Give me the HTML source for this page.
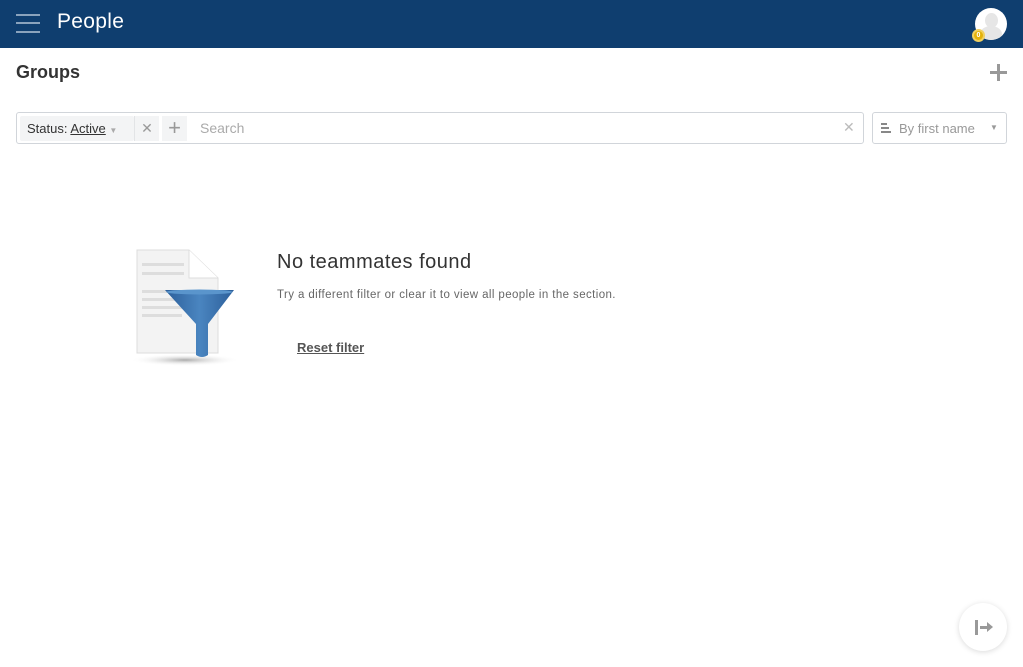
<!DOCTYPE html>
<html><head><style>
*{margin:0;padding:0;box-sizing:border-box}
body{width:1023px;height:667px;background:#fff;font-family:"Liberation Sans",sans-serif;position:relative;overflow:hidden;color:#333}
.hdr{position:absolute;left:0;top:0;width:1023px;height:48px;background:#0f3e6f}
.ham{position:absolute;left:16px;width:24px;height:2px;background:#8aa3bd}
.abs{position:absolute}
</style></head><body>
<div class="hdr">
 <div class="ham" style="top:14px"></div><div class="ham" style="top:22px"></div><div class="ham" style="top:31px"></div>
 <div class="abs" style="left:57px;top:10px;color:#fff;font-size:21px;letter-spacing:.3px">People</div>
 <div class="abs" style="left:975px;top:8px;width:32px;height:32px;border-radius:50%;background:#fff;overflow:hidden">
  <div class="abs" style="left:10px;top:5px;width:13px;height:15px;border-radius:50%;background:#e6e6e6"></div>
  <div class="abs" style="left:5px;top:18px;width:22px;height:16px;border-radius:50% 50% 0 0;background:#e6e6e6"></div>
 </div>
 <div class="abs" style="left:972px;top:29px;width:13px;height:13px;border-radius:50%;background:#e3b20a;border:2px solid #f0d060;color:#fff;font-size:7px;font-weight:bold;text-align:center;line-height:9px">0</div>
</div>
<div class="abs" style="left:16px;top:62px;font-size:18px;font-weight:bold;color:#333">Groups</div>
<div class="abs" style="left:990px;top:64px;width:17px;height:17px">
 <div class="abs" style="left:7px;top:0;width:3px;height:17px;background:#999"></div>
 <div class="abs" style="left:0;top:7px;width:17px;height:3px;background:#999"></div>
</div>
<div class="abs" style="left:16px;top:112px;width:848px;height:32px;border:1px solid #d1d5da;border-radius:3px">
 <div class="abs" style="left:3px;top:3px;width:114px;height:25px;background:#f3f4f5;border-radius:2px;font-size:13px;line-height:25px;padding-left:7px;color:#333">Status: <span style="text-decoration:underline">Active</span> <span style="color:#aaa;font-size:8px">▼</span></div>
 <div class="abs" style="left:117px;top:3px;width:25px;height:25px;background:#f3f4f5;border-left:1px solid #e2e4e6;color:#999;text-align:center;line-height:25px;font-size:14px">✕</div>
 <div class="abs" style="left:145px;top:3px;width:25px;height:25px;background:#f3f4f5;color:#999;text-align:center;line-height:24px;font-size:22px">+</div>
 <div class="abs" style="left:183px;top:7px;font-size:14px;color:#aaa">Search</div>
 <div class="abs" style="left:826px;top:6px;font-size:14px;color:#bbb">✕</div>
</div>
<div class="abs" style="left:872px;top:112px;width:135px;height:32px;border:1px solid #d1d5da;border-radius:3px">
 <div class="abs" style="left:8px;top:10px;width:6px;height:2px;background:#888"></div>
 <div class="abs" style="left:8px;top:14px;width:8px;height:2px;background:#888"></div>
 <div class="abs" style="left:8px;top:18px;width:10px;height:2px;background:#888"></div>
 <div class="abs" style="left:26px;top:8px;font-size:13px;color:#999">By first name</div>
 <div class="abs" style="left:117px;top:10px;font-size:8px;color:#999">▼</div>
</div>
<svg class="abs" style="left:128px;top:245px" width="115" height="125">
 <defs><radialGradient id="s"><stop offset="0" stop-color="#aaa"/><stop offset="1" stop-color="#fff" stop-opacity="0"/></radialGradient>
 <linearGradient id="f" x1="0" x2="1"><stop offset="0" stop-color="#2c5f9a"/><stop offset=".5" stop-color="#4a85c0"/><stop offset="1" stop-color="#2c5f9a"/></linearGradient></defs>
 <ellipse cx="57" cy="115" rx="55" ry="6" fill="url(#s)"/>
 <path d="M9 5 H61 L90 33 V108 H9 Z" fill="#f3f3f3" stroke="#ddd"/>
 <path d="M61 5 V33 H90" fill="#fff" stroke="#ddd"/>
 <g fill="#ddd"><rect x="14" y="18" width="42" height="3"/><rect x="14" y="27" width="42" height="3"/><rect x="14" y="45" width="40" height="3"/><rect x="14" y="53" width="40" height="3"/><rect x="14" y="61" width="40" height="3"/><rect x="14" y="69" width="40" height="3"/></g>
 <path d="M37 45 H106 L80 79 V110 Q74 114 68 110 V79 Z" fill="url(#f)"/>
 <ellipse cx="71.5" cy="47" rx="33" ry="2.5" fill="#5a95cc"/>
</svg>
<div class="abs" style="left:277px;top:251px;font-size:20px;color:#333;letter-spacing:.5px">No teammates found</div>
<div class="abs" style="left:277px;top:289px;font-size:11.5px;color:#666;letter-spacing:.4px">Try a different filter or clear it to view all people in the section.</div>
<div class="abs" style="left:297px;top:340px;font-size:13px;color:#555;font-weight:bold;text-decoration:underline">Reset filter</div>
<div class="abs" style="left:959px;top:603px;width:48px;height:48px;border-radius:50%;background:#fff;box-shadow:0 1px 6px rgba(0,0,0,.15)">
 <div class="abs" style="left:16px;top:17px;width:3px;height:15px;background:#999"></div>
 <div class="abs" style="left:21px;top:23px;width:8px;height:3px;background:#999"></div>
 <div class="abs" style="left:28px;top:19px;width:0;height:0;border-left:6px solid #999;border-top:5px solid transparent;border-bottom:5px solid transparent"></div>
</div>
</body></html>
